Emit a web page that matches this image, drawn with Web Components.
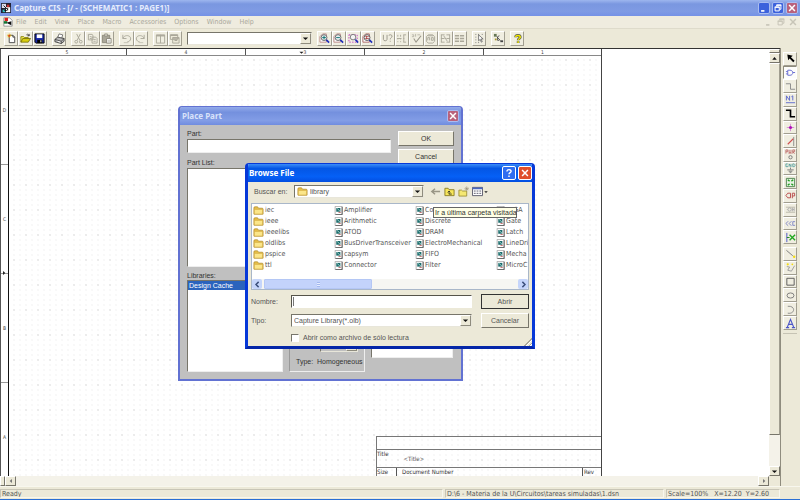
<!DOCTYPE html>
<html lang="en">
<head>
<meta charset="utf-8">
<title>Capture CIS - [/ - (SCHEMATIC1 : PAGE1)]</title>
<style>
html, body { height: 100%; margin: 0; }
body { overflow: hidden; font: 7px/9px "DejaVu Sans Condensed", "DejaVu Sans", sans-serif; color: #444; background: #ece9d8; --face: #ece9d8; --caption: "Noto Sans", "Open Sans", sans-serif; }
</style>
</head>
<body>
<capture-app></capture-app>
<script>
const ICONS = {
  app: '<rect x="0" y="0" width="12" height="12" fill="#223"/><rect x="1" y="1" width="5" height="5" fill="#dde"/><rect x="6" y="5" width="5" height="6" fill="#fff"/><path d="M2 8h3v3H2z" fill="#3bb"/><path d="M7 2h3v3H7z" fill="#c33"/><path d="M3 3l5 5M8 6v3M4 9h3" stroke="#000" fill="none"/>',
  doc: '<path d="M1 1h7l3 3v7H1z" fill="#fff" stroke="#888"/><path d="M2 1h4v4H2z" fill="#d22"/><path d="M1 5h4v3H1z" fill="#173"/><path d="M4 7l6-2v5z" fill="#111"/>',
  new: '<path d="M3.5 2.5h4l2 2v6h-6z" fill="#fff" stroke="#444"/><path d="M7.500 2.500v2h2" fill="none" stroke="#444"/><path d="M1 3h5M3.500 .5v5M2 1.500l3 3M5 1.500l-3 3" stroke="#e3b800" stroke-width=".8"/><circle cx="3.500" cy="3" r="1" fill="#d33"/>',
  open: '<path d="M1 10V4h3l1 1h4v2" fill="#f3ee5c" stroke="#8a8300"/><path d="M1 10l2-4h8.500l-2.500 4z" fill="#d8ce10" stroke="#665f00" stroke-width=".8"/><path d="M7 2c1-1 2-1 3 1m0-2v2H8" fill="none" stroke="#222" stroke-width=".8"/>',
  save: '<path d="M1 1h10v10H2l-1-1z" fill="#1a2aa8" stroke="#000"/><path d="M3 1.500h6v4H3z" fill="#fff"/><path d="M3.500 7.500h5.500V11H3.500z" fill="#000"/><path d="M7 8h1v2H7z" fill="#fff"/>',
  print: '<path d="M4 5l1.500-4 4 1L8.500 5.500" fill="#fff" stroke="#555" stroke-width=".8"/><path d="M1 7l3-2.500 7 1.500v3l-3 2.500-7-2z" fill="#bbb" stroke="#333" stroke-width=".9"/><path d="M1 7l7 2v2.500M8 9l3-3" stroke="#333" fill="none" stroke-width=".8"/><path d="M4 9l3 1" stroke="#fff"/>',
  cut: '<g stroke="#aaa799" fill="none"><path d="M4 1l3.500 7M8 1L4.500 8"/><circle cx="3.500" cy="9.500" r="1.500"/><circle cx="8.500" cy="9.500" r="1.500"/></g>',
  copy: '<g stroke="#aaa799" fill="#f1efe3"><path d="M1.500 1.500h4l1 1v5h-5zM5.500 4.500h4l1.500 1.500v5H5.500z"/><path d="M3 4h2M3 6h2M7 7h2.500M7 9h2.500"/></g>',
  paste: '<path d="M1.500 2.500h8v8h-8z" fill="#aaa799" stroke="#8b887b"/><path d="M4 1h3v2.500H4z" fill="#d9d6c8" stroke="#8b887b" stroke-width=".8"/><path d="M6 6h5v5H6z" fill="#fff" stroke="#8b887b"/><path d="M7 8h3M7 9.500h3" stroke="#aaa799" stroke-width=".7"/>',
  undo: '<path d="M2 2v4h4M2 6c2-5 9-3.500 8.500.5-.2 2-2 3-3.500 3" stroke="#aaa799" fill="none"/><path d="M3 10.500h5" stroke="#c4c1b3"/>',
  redo: '<path d="M10 2v4H6M10 6C8 1 1 2.500 1.500 6.500c.2 2 2 3 3.500 3" stroke="#aaa799" fill="none"/><path d="M4 10.500h5" stroke="#c4c1b3"/>',
  tileV: '<path d="M1.500 2h9v9h-9zM6 2v9" fill="none" stroke="#aaa799"/><path d="M1.500 3h9" stroke="#aaa799" stroke-width="1.500"/>',
  tileH: '<path d="M1.500 2h8v5h-8zM4 5h7v6H4z" fill="#ece9d8" stroke="#aaa799"/><path d="M1.500 2.500h8M4 5.500h7M6 8h3" stroke="#aaa799" stroke-width="1.500"/>',
  zin: '<path d="M1 4L4 1h4v9H1z" fill="#fff" stroke="#b88"/><circle cx="5.500" cy="5" r="3.200" fill="#e8eef0" stroke="#666"/><path d="M3.500 5h4M5.500 3v4" stroke="#087070"/><path d="M8 7.500l3 3" stroke="#2230b8" stroke-width="1.800"/>',
  zout: '<path d="M1 4L4 1h4v9H1z" fill="#fff" stroke="#b88"/><circle cx="5.500" cy="5" r="3.200" fill="#e8eef0" stroke="#666"/><path d="M3.500 5h4" stroke="#087070"/><path d="M8 7.500l3 3" stroke="#2230b8" stroke-width="1.800"/>',
  zarea: '<path d="M1 2h9v8H1z" fill="none" stroke="#c23ac2" stroke-dasharray="1.500 1.500"/><circle cx="5.500" cy="4.500" r="3" fill="#f4f4f4" stroke="#777"/><path d="M8 7l3 3.500" stroke="#2230b8" stroke-width="1.800"/>',
  zall: '<path d="M1 4L4 1h4v9H1z" fill="#fff" stroke="#a66"/><circle cx="5.500" cy="5" r="3.200" fill="#fff" stroke="#555"/><path d="M3.500 4h4M3.500 6h4M5 3v4" stroke="#a44" stroke-width=".9"/><path d="M8 7.500l3 3" stroke="#2230b8" stroke-width="1.800"/>',
  uq: '<g stroke="#99968a" fill="none"><path d="M1.500 2v5c0 2 4 2 4 0V2M7.500 3c0-1.500 3.500-1.500 3.500.5C11 5 9 5 9 7M9 8.500v1"/></g>',
  back: '<g stroke="#aaa799" fill="none"><path d="M2 2v2M2 6v1M2 9v1M5 2v2M5 6v1M5 9v1M1 6h5M8.500 2v8M8 2h3M8 6h1M8 10h3"/></g>',
  drc: '<path d="M3 6l2.500 4L11 3" stroke="#99968a" fill="none" stroke-width="1.200"/><path d="M1 2h2v2H1M5 1v3M7 2h3" stroke="#aaa799" stroke-width=".8" fill="none"/>',
  net: '<g stroke="#aaa799" fill="none"><path d="M1.500 4l2-2h5l2 2v5l-2 2h-5l-2-2zM3 8V5h2v3M7 5v3h2V5zM3 3h6"/></g>',
  xref: '<g stroke="#aaa799" fill="none"><path d="M1.500 2v8M1 2h4M1 6h4M1 10h4M7 2h4M7 6h4M7 10h4M10.500 2v8M4 3l4 6"/></g>',
  bom: '<path d="M1 3h4.500M6.500 3H11M1 6h4.500M6.500 6H11M1 9h4.500M6.500 9H11" stroke="#aaa799" stroke-width="1.500"/>',
  snap: '<path d="M2 1v1M2 4v1M2 7v1M2 10v1M5 1v1M5 10v1M9 1v1" stroke="#777"/><path d="M5 2l5 4.500H7.700L9 9.500l-1 .5L6.800 7 5 8.500z" fill="#fff" stroke="#444" stroke-width=".7"/>',
  pm: '<path d="M1 1h3v3H1z" fill="#675"/><path d="M7 3l-2 1v4h2M4 4l4 4" stroke="#444" fill="none" stroke-width=".9"/><path d="M2 6h2v2H2z" fill="#a93"/><path d="M8 8h3v2H8z" fill="#444"/>',
  help: '<path d="M4 4.500C4 2 9 2 9 4.500 9 6 6.700 6 6.700 8M6.700 9v2" fill="none" stroke="#555" stroke-width="3"/><path d="M4 4.500C4 2 9 2 9 4.500 9 6 6.700 6 6.700 8M6.700 9v1.800" fill="none" stroke="#eee600" stroke-width="1.600"/>',
  arrow: '<path d="M2.500 1.500l6 1.500-2 1.500 4 4-1.500 1.500-4-4-1.500 2z" fill="#000"/>',
  part: '<path d="M1 5h2M1 7.500h2M8.500 6h2.500M3 3.500h2.500c4 0 4 5.500 0 5.500H3z" fill="none" stroke="#6468d0"/>',
  wire: '<path d="M1 3h5v6h5" fill="none" stroke="#888"/>',
  alias: '<path d="M1.500 7V2l3.500 5V2M7 3l1.500-1v5" fill="none" stroke="#5a66cc"/><path d="M1 9.500h10" stroke="#5a66cc"/>',
  bus: '<path d="M1 2.500h5v7h5" fill="none" stroke="#000" stroke-width="1.800"/>',
  junction: '<path d="M6 2v8M2 6h8" stroke="#d08ad0"/><circle cx="6" cy="6" r="1.700" fill="#b010b8"/>',
  entry: '<path d="M9.500 1v10" stroke="#888"/><path d="M3 9l6-6" stroke="#d05050" stroke-width="1.200"/>',
  pwr: '<path d="M1 5V1h2v2H1M4.500 1v4l1-1.500 1 1.500V1M8.500 5V1h2v2h-2l2 2" stroke="#b85858" fill="none" stroke-width=".8"/><circle cx="6" cy="9" r="1.800" fill="none" stroke="#777"/>',
  gnd: '<path d="M3 1H1v3h2V3M4.500 4V1l2 3V1M8.500 1v3h1.500l1-1V2l-1-1z" stroke="#3c9494" fill="none" stroke-width=".8"/><path d="M6 5v2M2.500 7.500h7M4 9h4M5 10.500h2" stroke="#777"/>',
  hier: '<path d="M1.500 1.500h9v9h-9z" fill="#e8f2e4" stroke="#4c824c"/><path d="M3 3l2 1.500M9 3L7 4.500M3 9l2-1.500M9 9L7 7.500" stroke="#20a020" stroke-width="1.500"/>',
  port: '<path d="M1 6l2-2.500h3v5H3zM8 9V3.500h2.500v3H8" fill="none" stroke="#b84848"/>',
  pin: '<path d="M1 3.500h10M1 9h10M2 6h1" stroke="#bbb8aa"/><circle cx="5" cy="6" r="1.800" fill="none" stroke="#aaa"/><path d="M8 4v4M10 4v4M8 6h2" stroke="#aaa"/>',
  offpage: '<path d="M3.500 3.500L1 6l2.500 2.500M7 3.500L4.500 6 7 8.500M11 4H8.500v4H11" fill="none" stroke="#7078c4" stroke-width=".9"/>',
  nc: '<path d="M2 1v10" stroke="#4854c8"/><path d="M2 6h3" stroke="#178017"/><path d="M5 3l6 6M11 3L5 9" stroke="#22a822" stroke-width="1.500"/>',
  line: '<path d="M1.500 2.500l7 6" stroke="#777" fill="none"/><circle cx="10" cy="9.500" r="1.300" fill="#f4dc10"/>',
  poly: '<path d="M2 5l3 .5-2 3.500 4 1 3.500-6" stroke="#999" fill="none"/><circle cx="3" cy="2.500" r="1.200" fill="#f4dc10"/><circle cx="8" cy="2.500" r="1" fill="#f4dc10"/>',
  rect: '<path d="M2 2.500h8v7.500H2z" fill="none" stroke="#555"/>',
  ellipse: '<ellipse cx="6" cy="6" rx="3.800" ry="2.800" fill="none" stroke="#777"/>',
  arc: '<path d="M3 2.500c9-1 8 9 0 7.500" fill="none" stroke="#888"/>',
  text: '<path d="M2.500 10L6 1.500l3.500 8.500M4 7h4M1 10.500h3.500M7.500 10.500H11" fill="none" stroke="#4d57c8" stroke-width="1.200"/>',
  folder: '<path d="M1 3q0-1 1-1h3l1 1.500h4q1 0 1 1V10H1z" fill="#e8c04a" stroke="#b08c30" stroke-width=".8"/><path d="M1.500 4.800h9l-.3 5H1.500z" fill="#fbe68a" stroke="#d0a840" stroke-width=".6"/>',
  olb: '<path d="M1.500 .5h9v11h-9z" fill="#fff" stroke="#999"/><path d="M11 1v10.500H2" fill="none" stroke="#444"/><path d="M3 2.500h5.500v5H3z" fill="#1d6c6c"/><path d="M4 3l4 4" stroke="#c8f0e8"/><path d="M6 8.500h3" stroke="#a33"/>',
  goback: '<path d="M11 6H3M5.500 3L2 6l3.500 3" fill="none" stroke="#999686" stroke-width="1.600"/>',
  up: '<path d="M1 10.500V2.500h3.500l1 1.500H11v6.500z" fill="#f7e65a" stroke="#8a7e28"/><path d="M5.500 9V6M4 7l1.500-1.500L7 7M5.500 8.800h3" fill="none" stroke="#222" stroke-width=".9"/>',
  newfolder: '<path d="M1 11V4.500h3l1 1h4.500V11z" fill="#f5e872" stroke="#a0943a"/><path d="M9.500 .5v5M7 3h5M8 1.500l3 3M11 1.500l-3 3" stroke="#99917a" stroke-width=".7"/>',
  views: '<path d="M.5 1.500h11v9H.5z" fill="#fff" stroke="#556"/><path d="M.5 2.500h11" stroke="#4a68c0" stroke-width="2"/><path d="M2 5.500h2M5 5.500h2M8 5.500h2M2 8h2M5 8h2M8 8h2" stroke="#556"/>',
  min: '<path d="M2.500 9.500h4" stroke="currentColor" stroke-width="2"/>',
  restore: '<path d="M4.500 4V2.500h5v5H8M2.500 5h5v4.500h-5z" fill="none" stroke="currentColor" stroke-width="1.200"/><path d="M4 2.500h6M2 5h6" stroke="currentColor" stroke-width="1.600"/>',
  close: '<path d="M2.500 2.500l7 7M9.500 2.500l-7 7" stroke="currentColor" stroke-width="1.800"/>',
  ask: '<path d="M3.500 4.200C3.500 1 8.800 1.300 8.500 4.200 8.400 5.600 6 5.700 6 7.600M6 9v1.800" fill="none" stroke="currentColor" stroke-width="1.700"/>',
  left: '<path d="M7.500 3L4 6l3.500 3z" fill="currentColor"/>',
  right: '<path d="M4.500 3L8 6 4.500 9z" fill="currentColor"/>',
  upTri: '<path d="M3 7.500L6 4l3 3.500z" fill="currentColor"/>',
  downTri: '<path d="M2.500 4.500L6 8l3.500-3.500z" fill="currentColor"/>',
  chevL: '<path d="M7.500 2.500L4 6l3.500 3.500" fill="none" stroke="currentColor" stroke-width="1.900"/>',
  chevR: '<path d="M4.500 2.500L8 6 4.500 9.500" fill="none" stroke="currentColor" stroke-width="1.900"/>'
};
const icon = (n, size = 12) => `<svg class="ic" viewBox="0 0 12 12" width="${size}" height="${size}" aria-hidden="true">${ICONS[n]}</svg>`;
const BASE = `:host{box-sizing:border-box;display:block}*{box-sizing:border-box}.ic{display:block;flex:none}
button,input,select{font:inherit;color:inherit;margin:0;padding:0;border-radius:0;outline:0;appearance:none}`;
const define = (name, css, html) => customElements.define(name, class extends HTMLElement {
  constructor() {
    super();
    this.attachShadow({ mode: 'open' });
  }
  connectedCallback() {
    this.shadowRoot.innerHTML = `<style>${BASE}${css}</style>${typeof html === 'function' ? html(this) : html}`;
  }
});

define('push-tool', `
:host{display:flex;min-width:0}
button{flex:1;min-width:0;display:flex;align-items:center;justify-content:center;background:#f0eee1;border:1px solid;border-color:#fff #a19e90 #a19e90 #fff;overflow:hidden}
:host([pressed]) button{background:#fdfdfa;border-color:#8f8c7e #fff #fff #8f8c7e}`,
  el => `<button type="button" aria-label="${el.getAttribute('icon')}">${icon(el.getAttribute('icon'), 11)}</button>`);

define('window-button', `
:host{display:flex}
button{width:12px;height:12px;display:flex;align-items:center;justify-content:center;color:#fff;background:#3c62dc;border:1px solid #a9bcf0;border-radius:2px}
:host([kind=close]) button{background:#b9617c}
:host([kind=hot]) button{background:#e04f2c;border-color:#fff;width:14px;height:14px}
:host([kind=ask]) button{background:#2f6df0;border-color:#fff;width:14px;height:14px}
:host([kind=flat]) button{background:none;border:0;color:#c8c5b8}`,
  el => `<button type="button" aria-label="${el.getAttribute('icon')}">${icon(el.getAttribute('icon'), 10)}</button>`);

define('title-bar', `
:host{display:flex;align-items:center;gap:3px;height:16px;padding:0 2px 0 1px;color:#e6ecfc;font:bold 8px/12px var(--caption);background:linear-gradient(#9db6ee,#7a97e0 25%,#7f9be4 70%,#7592e6)}
h1{flex:1;font:inherit;margin:0}
div{display:flex;gap:2px}`,
  `${icon('app', 10)}<h1><slot></slot></h1><div><window-button icon="min"></window-button><window-button icon="restore"></window-button><window-button icon="close" kind="close"></window-button></div>`);

define('menu-bar', `
:host{display:flex;align-items:center;height:13px;padding:0 1px 0 3px;background:#efecdf;border-bottom:1px solid #dedbcb}
nav{flex:1;display:flex;gap:8px;padding-left:3px}
nav button{background:none;border:0;color:#aaa89c;white-space:nowrap}
div{display:flex}`,
  el => `${icon('doc', 10)}<nav>${el.getAttribute('items').split(',').map(t => `<button type="button">${t}</button>`).join('')}</nav>
  <div><window-button kind="flat" icon="min"></window-button><window-button kind="flat" icon="restore"></window-button><window-button kind="flat" icon="close"></window-button></div>`);

define('tool-group', `
:host{display:grid;grid-auto-flow:column;grid-auto-columns:1fr;height:15px}
:host([n="1"]){width:14px}:host([n="2"]){width:29px}:host([n="3"]){width:43px}:host([n="4"]){width:58px}:host([n="6"]){width:87px}`, `<slot></slot>`);

define('combo-box', `
:host{display:flex;height:13px;background:#fff;border:1px solid;border-color:#77756a #e8e6da #e8e6da #77756a;position:relative;align-items:center}
select{flex:1;min-width:0;height:100%;border:0;background:none;padding:0 12px 0 2px;color:#555}
span{position:absolute;right:0;top:0;bottom:0;width:11px;display:flex;align-items:center;justify-content:center;color:#111;background:var(--face);border:1px solid;border-color:#fff #8f8c7e #8f8c7e #fff;pointer-events:none}
.ic{margin-left:2px}span .ic{margin:0}`,
  el => `${el.getAttribute('icon') ? icon(el.getAttribute('icon'), 11) : ''}<select aria-label="${el.getAttribute('label')}"><option>${el.getAttribute('value') || ''}</option></select><span>${icon('downTri', 9)}</span>`);

const tools = (...n) => `<tool-group n="${n.length}">${n.map(i => `<push-tool icon="${i}"></push-tool>`).join('')}</tool-group>`;
define('tool-bar', `
:host{display:flex;align-items:center;gap:5px;height:19px;padding:0 4px 0 4px;background:var(--face)}
combo-box{width:125px}`,
  tools('new', 'open', 'save') + tools('print') + tools('cut', 'copy', 'paste') + tools('undo', 'redo') + tools('tileV', 'tileH') +
  `<combo-box label="Part"></combo-box>` + tools('zin', 'zout', 'zarea', 'zall') + tools('uq', 'back', 'drc', 'net', 'xref', 'bom') + tools('snap') + tools('pm') + tools('help'));

define('tool-palette', `
:host{width:20px;padding:4px 3px 0 2px;background:var(--face);border-left:1px solid #8f8c7e;display:flex;flex-direction:column;gap:3px}
div{display:grid;grid-auto-rows:1fr}
.a{height:192px}.b{height:83px}
hr{width:100%;margin:0;border:0;border-top:1px solid #c6c3b4}`,
  `<div class="a">${['arrow', 'part', 'wire', 'alias', 'bus', 'junction', 'entry', 'pwr', 'gnd', 'hier', 'port', 'pin', 'offpage', 'nc'].map(i => `<push-tool icon="${i}"${i === 'part' ? ' pressed' : ''}></push-tool>`).join('')}</div>
   <div class="b">${['line', 'poly', 'rect', 'ellipse', 'arc', 'text'].map(i => `<push-tool icon="${i}"></push-tool>`).join('')}</div><hr>`);

define('classic-scroll', `
:host{display:flex;background:#f4f2e9}
:host([vertical]){flex-direction:column}
i{flex:none;background:var(--face);border:1px solid;border-color:#fff #77756a #77756a #fff}
button{flex:none;width:11px;height:10px;display:flex;align-items:center;justify-content:center;background:var(--face);border:1px solid;border-color:#fff #77756a #77756a #fff;color:#111}
:host(:not([vertical])) button{color:#777}
:host([vertical]) i{height:4px}:host(:not([vertical])) i{width:5px}
b{flex:1;display:flex;flex-direction:inherit}
u{flex:12;background:var(--face);border:1px solid;border-color:#fff #a19e90 #77756a #fff}
b::after{content:"";flex:1}`,
  el => el.hasAttribute('vertical')
    ? `<i></i><button type="button" aria-label="Up">${icon('upTri', 9)}</button><b><u></u></b><button type="button" aria-label="Down">${icon('downTri', 9)}</button>`
    : `<i></i><button type="button" aria-label="Left">${icon('left', 8)}</button><b></b><button type="button" aria-label="Right">${icon('right', 8)}</button>`);

define('title-block', `
:host{display:grid;grid-template-rows:13px 18px 40px;border:1px solid #777;border-right:0;font-size:6px;line-height:8px;color:#333}
div{border-bottom:1px solid #777}
.t{display:flex;gap:15px}
.t span+span{padding-top:5px;color:#555}
.s{display:grid;grid-template-columns:19px 1fr 19px}
.s span+span{border-left:1px solid #555;padding-left:5px}
.s span+span+span{padding-left:1px}`,
  `<div></div><div class="t"><span>Title</span><span>&lt;Title&gt;</span></div><div class="s"><span>Size</span><span>Document Number</span><span>Rev</span></div>`);

define('schematic-sheet', `
:host{display:grid;grid-template:7px 1fr / 7px minmax(0,1fr);width:602px;height:446px;border-right:1px solid #444;border-left:1px solid #555;background:#fff;position:relative}
.top{display:grid;grid-template-columns:repeat(4,119px) 1fr;border-bottom:1px solid #888;font-size:5px;line-height:6px;text-align:center}
.top span{border-right:1px solid #555}.top span:last-child{border:0}
.left{display:grid;grid-auto-rows:109px;font-size:5px;text-align:center;align-items:stretch}
.left span{display:grid;place-items:center;border-bottom:1px solid #999}
.area{border-left:1px solid #111;background:
 radial-gradient(circle at 4px 4px,#cdcdcd 0,transparent 1px) 1px 0/12px 25px,
 radial-gradient(circle at 4px 4px,#eaeaea 0,transparent 1px) 1px 0/6px 5px,#fff}
.mark{position:absolute;color:#222}
.mt{left:297px;top:0}.ml{left:-1px;top:220px}
title-block{position:absolute;right:0;top:387px;width:225px}`,
  `<span></span><div class="top"><span>5</span><span>4</span><span>3</span><span>2</span><span>1</span></div>
   <div class="left"><span>D</span><span>C</span><span>B</span><span>A</span></div><div class="area"></div>
   <div class="mark mt">${icon('downTri', 7)}</div><div class="mark ml">${icon('right', 8)}</div><title-block></title-block>`);

define('work-area', `
:host{display:grid;grid-template:1fr 10px / 1fr 11px;border-top:1px solid #333;min-width:0;min-height:0}
.view{overflow:hidden;background:#fff;min-height:0}`,
  `<div class="view"><schematic-sheet></schematic-sheet></div><classic-scroll vertical></classic-scroll><classic-scroll></classic-scroll>`);

define('status-bar', `
:host{display:grid;grid-template-columns:443px 1fr 114px 18px;gap:2px;height:14px;padding:2px 0 1px;background:var(--face);border-top:1px solid #f8f7ee;border-bottom:1px solid #2a6fd4}
span{border:1px solid;border-color:#c8c5b6 #f8f7ee #f8f7ee #c8c5b6;line-height:8px;padding-left:1px;white-space:pre;overflow:hidden;color:#555}
span:last-of-type{display:flex;justify-content:space-between;padding-right:10px}
em{font-style:normal}`,
  `<span>Ready</span><span>D:\\6 - Materia de la U\\Circuitos\\tareas simuladas\\1.dsn</span><span><em>Scale=100%</em><em>X=12.20  Y=2.60</em></span>`);

define('xp-button', `
:host{display:flex;height:15px;font-family:"Liberation Sans",sans-serif}
button{flex:1;background:var(--face);border:1px solid;border-color:#fff #77756a #77756a #fff}
:host([default]) button{border-color:#333}`, `<button type="button"><slot></slot></button>`);

define('xp-window', `
:host{display:flex;flex-direction:column;border:2px solid #6272d2;border-top-width:1px;border-radius:4px 4px 0 0;background:#c0c0c0;overflow:hidden}
header{display:flex;align-items:center;gap:2px;height:18px;padding:0 2px;color:#d9e2fa;background:linear-gradient(#93abea,#7490de 30%,#829de6 75%,#6f8ce0)}
h2{flex:1;margin:0;font:bold 8px/12px var(--caption)}
:host([active]){border:3px solid #0638d8;border-top-width:1px;border-bottom-color:#0426a8;background:var(--face)}
:host([active]) header{color:#fff;background:linear-gradient(#3b8cf8,#0456e4 25%,#0560f6 70%,#034ee0);padding:0 0 0 1px}`,
  el => `<header><h2>${el.getAttribute('caption')}</h2>${el.hasAttribute('active') ? '<window-button kind="ask" icon="ask"></window-button><window-button kind="hot" icon="close"></window-button>' : '<window-button kind="close" icon="close"></window-button>'}</header><slot></slot>`);

define('place-part', `
:host{display:flex;flex-direction:column;font-family:"Liberation Sans",sans-serif;color:#333}
xp-window{flex:1}
form{display:grid;grid-template-columns:1fr 56px;column-gap:7px;padding:4px 7px 7px;flex:1}
label{display:block;height:10px}
input{width:100%;height:14px}
input,.list{background:#fff;border:1px solid;border-color:#77756a #eee #eee #77756a}
.b{display:flex;flex-direction:column;gap:3px;padding-top:2px}
.list{height:99px}
.pl{margin-top:5px}.lib{margin-top:4px}
.low{display:grid;grid-template-columns:96px 76px 82px;column-gap:6px;grid-column:1/-1;align-items:end}
.low .list{height:92px}
.list b{display:block;font-weight:400;background:#2a63bd;color:#fff;padding-left:1px}
.group{border:1px solid;border-color:#999 #eee #eee #999;height:80px;display:flex;flex-direction:column;justify-content:end;gap:5px;padding:0 6px 5px}
.group div{display:flex;gap:5px;white-space:pre}
.group combo-box{width:42px;margin-left:4px;height:12px;background:#c0c0c0}
.low .prev{height:72px;margin-bottom:14px}`,
  `<xp-window caption="Place Part"><form>
   <div><label for="p">Part:</label><input id="p"><div class="pl"><label>Part List:</label><div class="list"></div></div><div class="lib">Libraries:</div></div>
   <div class="b"><xp-button>OK</xp-button><xp-button>Cancel</xp-button></div>
   <div class="low"><div class="list"><b>Design Cache</b></div><div class="group"><div>Part:<combo-box label="Part"></combo-box></div><div>Type:  Homogeneous</div></div><div class="list prev"></div></div>
   </form></xp-window>`);

const FILES = [['iec', 'ieee', 'ieeelibs', 'oldlibs', 'pspice', 'ttl'], ['Amplifier', 'Arithmetic', 'ATOD', 'BusDriverTransceiver', 'capsym', 'Connector'], ['Counter', 'Discrete', 'DRAM', 'ElectroMechanical', 'FIFO', 'Filter'], ['FPGA', 'Gate', 'Latch', 'LineDri', 'Mecha', 'MicroC']];
define('file-list', `
:host{display:flex;flex-direction:column;height:87px;background:#fff;border:1px solid #a9b7c9;overflow:hidden;color:#555}
.f{flex:1;display:grid;grid-template:repeat(6,11px) / repeat(3,81px) 1fr;grid-auto-flow:column;padding:1px 0 0 1px;overflow:hidden}
.f div{display:flex;align-items:center;gap:1px;white-space:nowrap}
.s{display:grid;grid-template-columns:10px 1fr 10px;gap:2px;height:10px;background:#f6f6f2}
.s button{display:flex;align-items:center;justify-content:center;background:#c5d5fb;border:0;border-radius:2px;color:#3b4f7c}
.s span{width:43%;background:#c3d3fb;border-radius:1px;display:grid;place-items:center;border:1px solid #b4c7f5}
.s i{width:3px;height:5px;background:repeating-linear-gradient(#a3b8ee 0 1px,#e5edff 1px 2px)}`,
  `<div class="f">${FILES.map((c, i) => c.map(t => `<div>${icon(i ? 'olb' : 'folder', i ? 9 : 11)}${t}</div>`).join('')).join('')}</div>
   <div class="s"><button type="button" aria-label="Left">${icon('chevL', 9)}</button><span><i></i></span><button type="button" aria-label="Right">${icon('chevR', 9)}</button></div>`);

define('browse-file', `
:host{display:flex;flex-direction:column;font-family:"Liberation Sans",sans-serif;color:#555}
xp-window{flex:1}
form{flex:1;padding:3px;display:flex;flex-direction:column;position:relative}
.look{display:grid;grid-template-columns:40px 130px auto;align-items:center;height:13px;margin:0 0 5px 3px}
.nav{display:flex;gap:3px;align-items:center;padding-left:6px}
.nav button{border:0;background:none;display:flex;align-items:center;color:#222}
file-list{font-family:"DejaVu Sans Condensed","DejaVu Sans",sans-serif}
.g{display:grid;grid-template-columns:40px 1fr 48px;column-gap:9px;row-gap:4px;align-items:center;padding-top:4px}
.g label{white-space:nowrap}
.g .c{margin-left:-9px}
input[type=text]{width:auto;height:13px;border:1px solid;border-color:#55534a #fff #fff #55534a;background:linear-gradient(#777,#777) 1px 1px/1px 9px no-repeat #fff}
.ro{grid-column:2;display:flex;gap:4px;align-items:center;margin-left:-9px;height:11px}
input[type=checkbox]{width:8px;height:8px;background:#fff;border:1px solid;border-color:#77756a #fff #fff #77756a}
.grip{position:absolute;right:0;bottom:0;width:9px;height:9px;background:repeating-linear-gradient(135deg,transparent 0 1px,#aaa799 1px 2px,#fff 2px 3px);clip-path:polygon(100% 0,100% 100%,0 100%)}
.tip{position:absolute;left:185px;top:25px;width:84px;height:11px;padding-left:1px;line-height:9px;background:#ffffe5;border:1px solid #666;color:#333;white-space:nowrap;font-family:"Liberation Sans",sans-serif}`,
  `<xp-window active caption="Browse File"><form>
   <div class="look"><span>Buscar en:</span><combo-box label="Buscar en" icon="folder" value="library"></combo-box>
    <div class="nav"><button type="button" aria-label="Back">${icon('goback', 11)}</button><button type="button" aria-label="Up">${icon('up', 11)}</button><button type="button" aria-label="New folder">${icon('newfolder', 11)}</button><button type="button" aria-label="Views">${icon('views', 11)}${icon('downTri', 6)}</button></div></div>
   <file-list></file-list>
   <div class="g"><label for="n">Nombre:</label><input type="text" id="n" class="c"><xp-button default>Abrir</xp-button>
    <span>Tipo:</span><combo-box class="c" label="Tipo" value="Capture Library(*.olb)"></combo-box><xp-button>Cancelar</xp-button>
    <div class="ro"><input type="checkbox" id="r"><label for="r">Abrir como archivo de sólo lectura</label></div></div>
   <div class="grip"></div><div class="tip" role="tooltip">Ir a última carpeta visitada</div>
  </form></xp-window>`);

define('capture-app', `
:host{display:flex;flex-direction:column;height:100vh;position:relative}
main{flex:1;min-height:0;display:grid;grid-template-columns:1fr 20px}
place-part{position:absolute;left:178px;top:106px;width:285px;height:275px}
browse-file{position:absolute;left:245px;top:163px;width:290px;height:186px}`,
  `<title-bar>Capture CIS - [/ - (SCHEMATIC1 : PAGE1)]</title-bar>
   <menu-bar items="File,Edit,View,Place,Macro,Accessories,Options,Window,Help"></menu-bar>
   <tool-bar></tool-bar><main><work-area></work-area><tool-palette></tool-palette></main><status-bar></status-bar>
   <place-part></place-part><browse-file></browse-file>`);
</script>
</body>
</html>
